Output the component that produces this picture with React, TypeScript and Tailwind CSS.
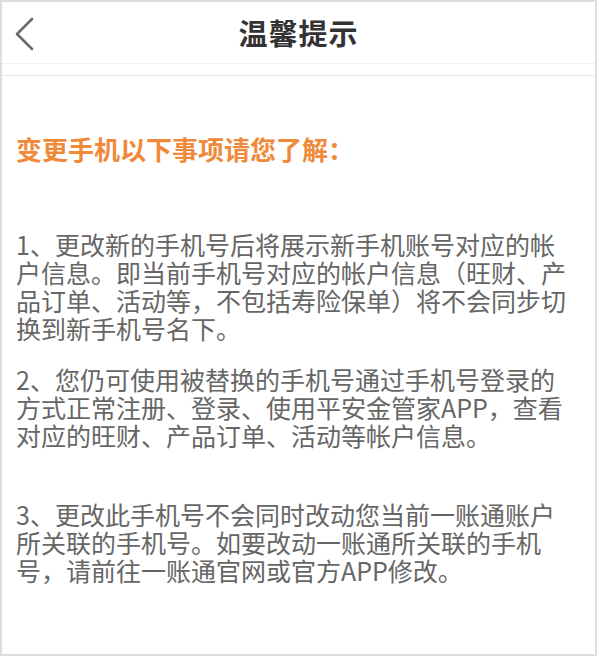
import React from "react";

const font = {
  fontFamily: '"Noto Sans CJK SC", "Noto Sans", sans-serif',
};

const para1 = [
  "1、更改新的手机号后将展示新手机账号对应的帐",
  "户信息。即当前手机号对应的帐户信息（旺财、产",
  "品订单、活动等，不包括寿险保单）将不会同步切",
  "换到新手机号名下。",
];

const para2 = [
  "2、您仍可使用被替换的手机号通过手机号登录的",
  "方式正常注册、登录、使用平安金管家APP，查看",
  "对应的旺财、产品订单、活动等帐户信息。",
];

const para3 = [
  "3、更改此手机号不会同时改动您当前一账通账户",
  "所关联的手机号。如要改动一账通所关联的手机",
  "号，请前往一账通官网或官方APP修改。",
];

function Paragraph({ lines, className }: { lines: string[]; className?: string }) {
  return (
    <div className={`text-[25px] leading-[28px] text-[#666666] ${className ?? ""}`}>
      {lines.map((l, i) => (
        <div key={i} className="whitespace-nowrap">
          {l}
        </div>
      ))}
    </div>
  );
}

export default function App() {
  return (
    <div className="w-[600px] h-[658px] bg-white" style={font}>
      <div className="w-[597px] h-[656px] border-2 border-[#dedede] bg-white flex flex-col overflow-hidden">
        {/* header */}
        <div className="h-[62px] flex items-center relative border-b border-[#f0f0f0]">
          <button className="absolute left-[12px] top-[15px] p-0 text-[#6b6b6b]">
            <svg width="22" height="34" viewBox="0 0 22 34" fill="none" stroke="currentColor" strokeWidth="2.6" strokeLinecap="round" strokeLinejoin="round">
              <path d="M18 2 L3 17 L18 32" />
            </svg>
          </button>
          <div className="flex-1 text-center text-[29px] font-bold text-[#333333] tracking-[1px]">
            温馨提示
          </div>
        </div>
        <div className="h-[12px] border-b border-[#e6e6e6]" />

        <div className="pl-[14px]">
          <div className="mt-[59px] text-[26px] leading-[28px] font-bold text-[#f08a3a]">
            变更手机以下事项请您了解：
          </div>
          <Paragraph lines={para1} className="mt-[67px]" />
          <Paragraph lines={para2} className="mt-[23px]" />
          <Paragraph lines={para3} className="mt-[51px]" />
        </div>
      </div>
    </div>
  );
}
